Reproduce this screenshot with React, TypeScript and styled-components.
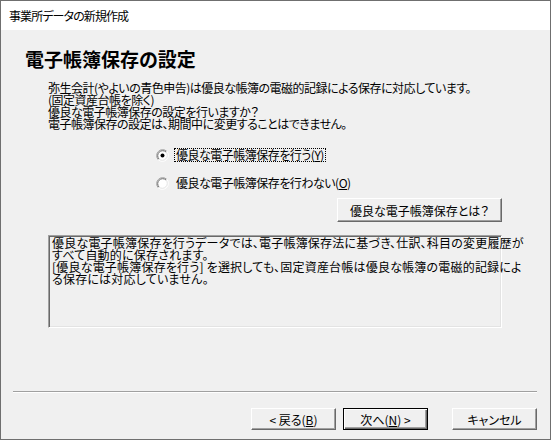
import styled, { createGlobalStyle } from 'styled-components';

const GlobalStyle = createGlobalStyle`
  html, body {
    margin: 0;
    padding: 0;
    background: #f0f0f0;
  }
  body {
    font-family: "Noto Sans CJK JP", "Noto Sans", sans-serif;
    font-size: 12px;
    color: #000;
    font-feature-settings: "palt";
  }
`;

const Window = styled.div`
  width: 551px;
  height: 440px;
  box-sizing: border-box;
  border: 1px solid #6f6f6f;
  display: flex;
  flex-direction: column;
  background: #f0f0f0;
`;

const TitleBar = styled.div`
  height: 29px;
  flex-shrink: 0;
  background: #fff;
  display: flex;
  align-items: center;
  padding-left: 8px;
  font-size: 12px;
  line-height: 14px;
  letter-spacing: -0.9px;
`;

const Body = styled.div`
  flex: 1;
  display: flex;
  flex-direction: column;
  padding: 0 13px 9px 12px;
`;

const Heading = styled.h1`
  margin: 17px 0 0 12px;
  font-size: 19px;
  line-height: 24px;
  font-weight: bold;
`;

const Description = styled.div`
  margin: 11px 0 0 35px;
  line-height: 12px;
  letter-spacing: -0.5px;
`;

// lines sit tight together, as in the original dialog
const Line = styled.div`
  white-space: nowrap;
`;

const RadioGroup = styled.div`
  margin: 17px 0 0 143px;
  display: flex;
  flex-direction: column;
  gap: 12px;
`;

const RadioRow = styled.div`
  height: 16px;
  display: flex;
  align-items: center;
  gap: 5px;
`;

const RadioLabel = styled.span<{ $focused?: boolean }>`
  padding: 0 1px;
  line-height: 12px;
  letter-spacing: -0.5px;
  border: 1px ${p => (p.$focused ? 'dotted #000' : 'solid transparent')};
  white-space: nowrap;
`;

const Key = styled.span`
  text-decoration: underline;
  text-underline-offset: 1px;
`;

const HelpRow = styled.div`
  margin: 7px 0 0 35px;
  width: 454px;
  display: flex;
  justify-content: flex-end;
`;

const PushButton = styled.button<{ $width: number; $height?: number; $default?: boolean }>`
  width: ${p => p.$width}px;
  height: ${p => p.$height ?? 22}px;
  box-sizing: border-box;
  padding: 0;
  font: inherit;
  font-size: 12px;
  color: #000;
  background: #f0f0f0;
  border: 1px solid;
  border-color: ${p => (p.$default ? '#000' : '#fff #696969 #696969 #fff')};
  box-shadow: ${p =>
    p.$default
      ? 'inset 1px 1px #fff, inset -1px -1px #696969, inset -2px -2px #a0a0a0'
      : 'inset -1px -1px #a0a0a0, inset 1px 1px #f0f0f0'};
  display: flex;
  align-items: center;
  justify-content: center;
  white-space: nowrap;
`;

const InfoBox = styled.div`
  margin: 13px 0 0 35px;
  width: 454px;
  height: 93px;
  box-sizing: border-box;
  border: 1px solid;
  border-color: #a0a0a0 #fff #fff #a0a0a0;
  box-shadow: inset 1px 1px #696969, inset -1px -1px #e3e3e3;
  padding: 1px 2px 0 3px;
  line-height: 12px;
  letter-spacing: 0.2px;
  background: #f0f0f0;
`;

const Separator = styled.div`
  margin-top: auto;
  border-top: 1px solid #a0a0a0;
  border-bottom: 1px solid #fff;
`;

const Footer = styled.div`
  margin-top: 15px;
  display: flex;
  justify-content: flex-end;
`;

const ButtonGap = styled.div<{ $size: number }>`
  width: ${p => p.$size}px;
`;

function RadioMark({ checked }: { checked?: boolean }) {
  return (
    <svg width="13" height="13" viewBox="0 0 13 13">
      <circle cx="6.5" cy="6.5" r="5.5" fill="#fff" />
      <path d="M2.26 10.74 A6 6 0 0 1 10.74 2.26" fill="none" stroke="#a0a0a0" strokeWidth="1" />
      <path d="M10.74 2.26 A6 6 0 0 1 2.26 10.74" fill="none" stroke="#fff" strokeWidth="1" />
      <path d="M2.97 10.03 A5 5 0 0 1 10.03 2.97" fill="none" stroke="#696969" strokeWidth="1" />
      <path d="M10.03 2.97 A5 5 0 0 1 2.97 10.03" fill="none" stroke="#e3e3e3" strokeWidth="1" />
      {checked && <circle cx="6.5" cy="6.5" r="2" fill="#000" />}
    </svg>
  );
}

export default function App() {
  return (
    <>
      <GlobalStyle />
      <Window>
        <TitleBar>事業所データの新規作成</TitleBar>
        <Body>
          <Heading>電子帳簿保存の設定</Heading>
          <Description>
            <Line>弥生会計(やよいの青色申告)は優良な帳簿の電磁的記録による保存に対応しています。</Line>
            <Line>(固定資産台帳を除く)</Line>
            <Line>優良な電子帳簿保存の設定を行いますか？</Line>
            <Line>電子帳簿保存の設定は、期間中に変更することはできません。</Line>
          </Description>
          <RadioGroup>
            <RadioRow>
              <RadioMark checked />
              <RadioLabel $focused>
                優良な電子帳簿保存を行う(<Key>Y</Key>)
              </RadioLabel>
            </RadioRow>
            <RadioRow>
              <RadioMark />
              <RadioLabel>
                優良な電子帳簿保存を行わない(<Key>O</Key>)
              </RadioLabel>
            </RadioRow>
          </RadioGroup>
          <HelpRow>
            <PushButton $width={165} $height={24}>優良な電子帳簿保存とは？</PushButton>
          </HelpRow>
          <InfoBox>
            <Line>優良な電子帳簿保存を行うデータでは、電子帳簿保存法に基づき、仕訳、科目の変更履歴が</Line>
            <Line>すべて自動的に保存されます。</Line>
            <Line>[優良な電子帳簿保存を行う] を選択しても、固定資産台帳は優良な帳簿の電磁的記録によ</Line>
            <Line>る保存には対応していません。</Line>
          </InfoBox>
          <Separator />
          <Footer>
            <PushButton $width={85}>
              &lt; 戻る(<Key>B</Key>)
            </PushButton>
            <ButtonGap $size={7} />
            <PushButton $width={85} $default>
              次へ(<Key>N</Key>) &gt;
            </PushButton>
            <ButtonGap $size={24} />
            <PushButton $width={85}>キャンセル</PushButton>
          </Footer>
        </Body>
      </Window>
    </>
  );
}
